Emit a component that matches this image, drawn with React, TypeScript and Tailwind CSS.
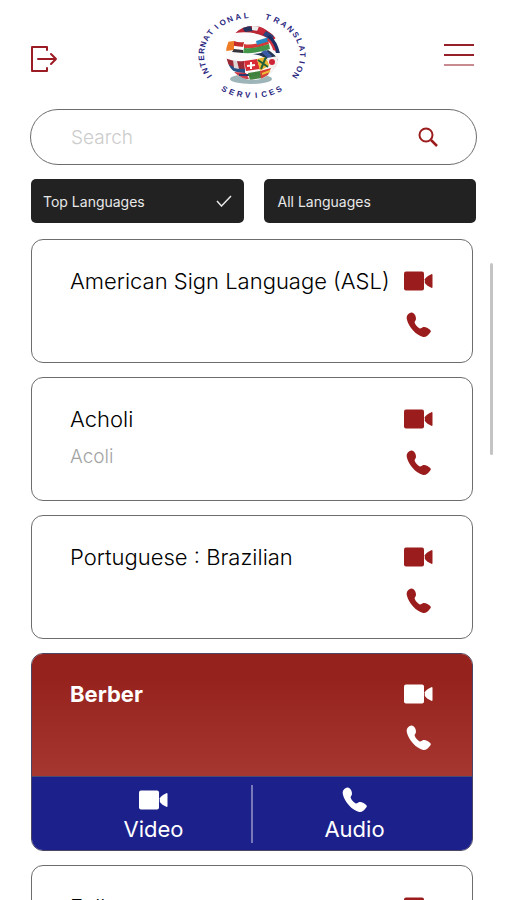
import { useId } from "react";

type Arc = { word: string; from: number; to: number; inward?: boolean };

const ARCS: Arc[] = [
  { word: "INTERNATIONAL", from: 237, to: 354 },
  { word: "TRANSLATION", from: 19, to: 121 },
  { word: "SERVICES", from: 212, to: 148, inward: true },
];

function ArcWord({ word, from, to, inward }: Arc) {
  const xs: string[] = [];
  const ys: string[] = [];
  const rot: string[] = [];
  word.split("").forEach((letter, i) => {
    const deg = from + ((to - from) * i) / (word.length - 1);
    const a = (deg * Math.PI) / 180;
    const turn = inward ? deg - 180 : deg;
    const t = (turn * Math.PI) / 180;
    const half = letter === "I" ? 1 : 3;
    const drop = 3;
    xs.push((60 + 51 * Math.sin(a) - half * Math.cos(t) - drop * Math.sin(t)).toFixed(1));
    ys.push((48 - 40 * Math.cos(a) - half * Math.sin(t) + drop * Math.cos(t)).toFixed(1));
    rot.push(turn.toFixed(1));
  });
  return (
    <text x={xs.join(" ")} y={ys.join(" ")} rotate={rot.join(" ")} className="fill-[#29267f] font-['Liberation_Sans',sans-serif] text-[8px] font-bold">
      {word}
    </text>
  );
}

function Logo() {
  const id = useId();
  return (
    <svg viewBox="0 0 120 96" role="img" aria-label="International Translation Services" className="h-24 w-[120px]">
      <defs>
        <clipPath id={id + "c"}><circle cx="61" cy="46" r="27" /></clipPath>
        <radialGradient id={id + "g"} cx="0.45" cy="0.4" r="0.7">
          <stop offset="0.75" stopColor="#ffffff" stopOpacity="0" />
          <stop offset="1" stopColor="#0b1522" stopOpacity="0.25" />
        </radialGradient>
      </defs>
      <ellipse cx="59" cy="72" rx="21" ry="5" fill="#9db4b8" />
      <circle cx="61" cy="46" r="27" fill="#fbfbfc" />
      <g clipPath={`url(#${id}c)`}>
        <path d="M43 26 Q53 15 68 19 L85 30 80 34 Q66 23 43 26z" fill="#b92532" />
        <path d="M50 20l8-2 3 6-8 1z" fill="#26315c" />
        <path d="M60 17l7 2-1 5-6-1z" fill="#eeeeee" />
        <path d="M67 20l7 3-3 4-6-3z" fill="#c8283a" />
        <path d="M74 24l8 5-3 4-8-5z" fill="#2c447e" />
        <path d="M34 35l8-1v9l-8 1z" fill="#ef7c24" />
        <path d="M42 34q5 2 10 1l-1 5q-4 1-9-1z" fill="#c42b2b" />
        <path d="M42 39l10 1v2l-10-1z" fill="#ffffff" />
        <path d="M42 42l9 1v3l-11-1z" fill="#35343b" />
        <path d="M52 37q9 2 24-4l1 4q-10 5-25 4z" fill="#d53a36" />
        <path d="M52 41q11 1 25-4l1 5q-13 5-27 4z" fill="#43954a" />
        <path d="M64 34l13-4 1 4-13 4z" fill="#2887c0" />
        <path d="M78 28q7 6 10 18h-4q-3-9-9-16z" fill="#1c2d63" />
        <path d="M76 31q6 5 8 13l-3-1q-1-5-6-10z" fill="#d3313c" />
        <path d="M60 47q10 0 16-4 7 4 10 10l-6 3q-8-8-20-9z" fill="#24334f" />
        <path d="M69 45l5-2 6 6-3 3z" fill="#3b5aa5" />
        <path d="M33 51q9 4 19 3l1 9q-10-1-17-4z" fill="#9c2735" />
        <path d="M36 57q8 5 17 5v4q-9 0-15-4z" fill="#275087" />
        <path d="M41 53l4 1 2 8-5-1z" fill="#dfd5d5" />
        <path d="M52 54l13-2 3 10-14 2z" fill="#d72b36" />
        <path d="M59 55v7m-4-3 8-1" stroke="#ffffff" strokeWidth="2" />
        <path d="M65 52l8-2 5 8-10 6z" fill="#efb834" />
        <path d="M66 53l10 7m-7 2 5-12" stroke="#22613a" strokeWidth="2" />
        <path d="M75 51l11-2-1 11-7 2z" fill="#f4f0ee" />
        <circle cx="80" cy="55" r="3" fill="#cf2437" />
        <path d="M42 65l12 1 3 6H46z" fill="#ca3845" />
        <path d="M47 68h10" stroke="#29386f" strokeWidth="2" />
        <path d="M56 66l12-2 2 7-12 2z" fill="#40813d" />
        <path d="M68 64l11-3-3 7-7 4z" fill="#d6392f" />
        <path d="M70 67l8-3" stroke="#efb834" strokeWidth="2" />
      </g>
      <circle cx="61" cy="46" r="27" fill={`url(#${id}g)`} />
      {ARCS.map((a) => <ArcWord key={a.word} {...a} />)}
    </svg>
  );
}

function VideoIcon() {
  return (
    <svg viewBox="0 0 30 20" fill="currentColor" aria-hidden="true" className="h-5 w-[30px]">
      <rect x="0" y="0.5" width="20" height="19" rx="2" />
      <path d="M20.800 8.200Q22 5.500 27.300 3.200q1.200-.4 1.200.8v12q0 1.200-1.200.8Q22 14.500 20.800 11.800z" />
    </svg>
  );
}

function PhoneIcon() {
  return (
    <svg viewBox="0 0 26 26" fill="currentColor" aria-hidden="true" className="size-[26px]">
      <path d="M1.500 3C3 .8 5.800-.2 7.500 1.300c1.900 1.700 2.900 4.200 2.300 6.400-.3 1.200-1.600 2-1 3.300 1 2.300 2.600 4.200 4.600 5.300 1.400.7 2.300-.8 3.800-1.300 2.200-.6 5.400 1.300 7.200 3.200.7.800.4 1.500-.2 2.300-1.800 2.600-4.300 4.900-7 4.500C10 23.500 2.500 14.500.9 7.500.5 5.700.6 4.300 1.500 3z" />
    </svg>
  );
}

function Actions({ name }: { name: string }) {
  return (
    <div className="flex w-[30px] shrink-0 flex-col items-center gap-[21px]">
      <button type="button" aria-label={`Video call, ${name}`}><VideoIcon /></button>
      <button type="button" aria-label={`Audio call, ${name}`}><PhoneIcon /></button>
    </div>
  );
}

function LanguageCard({ name, native }: { name: string; native?: string }) {
  return (
    <li className="flex h-[124px] shrink-0 justify-between rounded-xl border border-[#6d6d6d] px-[38px] pt-[31px] text-[#9b1c1c]">
      <div className="text-black">
        <h2 className="text-[22px] leading-5 whitespace-nowrap">{name}</h2>
        {native && <p className="pt-4 text-[19px] leading-6 text-[#a3a3a3]">{native}</p>}
      </div>
      <Actions name={name} />
    </li>
  );
}

export default function App() {
  return (
    <div className="flex h-screen flex-col overflow-hidden bg-white pt-[7px] font-[Inter,sans-serif] font-light text-black">
      <header className="grid grid-cols-3 items-center pr-8 pl-[30px]">
        <button type="button" aria-label="Log out" className="mt-2 justify-self-start text-[#9b1c24]">
          <svg viewBox="0 0 28 28" fill="none" stroke="currentColor" strokeWidth="2" strokeLinecap="round" strokeLinejoin="round" className="size-7">
            <path d="M17 5V2H2v24h15v-3M8 14h18M21 9l5 5-5 5" />
          </svg>
        </button>
        <div className="justify-self-center"><Logo /></div>
        <button type="button" aria-label="Menu" className="flex w-[30px] flex-col gap-2 justify-self-end">
          <span className="h-0.5 w-full bg-[#96202a]" />
          <span className="h-0.5 w-full bg-[#96202a]" />
          <span className="h-0.5 w-full bg-[#c78b91]" />
        </button>
      </header>

      <div className="pt-[6px] pr-[29px] pl-[30px]">
        <label className="flex h-14 items-center rounded-full border border-[#6d6d6d] pr-[38px] pl-10">
          <span className="sr-only">Search languages</span>
          <input type="text" placeholder="Search" className="h-9 min-w-0 flex-1 text-[19px] leading-8 outline-none placeholder:text-[#cccccc]" />
          <svg viewBox="0 0 20 20" fill="none" stroke="#9b1c1c" aria-hidden="true" className="size-5">
            <circle cx="8" cy="8" r="6.500" strokeWidth="2" />
            <path d="m13 13 6 6" strokeWidth="2.500" />
          </svg>
        </label>
        <div className="grid grid-cols-2 gap-5 px-px pt-[14px] text-[14px] font-normal text-[#e8e8e8]">
          <button type="button" aria-pressed="true" className="flex h-11 items-center justify-between rounded-[5px] bg-[#222222] px-3">
            Top Languages
            <svg viewBox="0 0 16 12" fill="none" stroke="currentColor" strokeWidth="1.500" aria-hidden="true" className="h-3 w-4"><path d="m1 6 4.500 5L15 1" /></svg>
          </button>
          <button type="button" aria-pressed="false" className="flex h-11 items-center rounded-[5px] bg-[#222222] px-[14px]">All Languages</button>
        </div>
      </div>

      <main className="flex min-h-0 flex-1 pt-4 pr-[13px] pl-[31px]">
        <ul className="flex min-w-0 flex-1 flex-col gap-[14px]">
          <LanguageCard name="American Sign Language (ASL)" />
          <LanguageCard name="Acholi" native="Acoli" />
          <LanguageCard name="Portuguese : Brazilian" />
          <li className="shrink-0 overflow-hidden rounded-xl border border-[#4a4560] text-white">
            <div className="flex h-[122px] justify-between bg-linear-to-b from-[#96221d] from-20% to-[#a63630] px-[38px] pt-[30px]">
              <h2 className="text-[22px] leading-5 font-bold">Berber</h2>
              <Actions name="Berber" />
            </div>
            <div className="grid h-[74px] grid-cols-[1fr_2px_1fr] items-center border-t border-[#4a4a70] bg-[#1c208b] text-[22px] leading-6 font-normal">
              <button type="button" className="flex flex-col items-center gap-1 pl-6"><span className="flex h-[26px] items-center"><VideoIcon /></span>Video</button>
              <span className="h-[58px] bg-[#7779bb]" />
              <button type="button" className="flex flex-col items-center gap-1 pr-4"><PhoneIcon />Audio</button>
            </div>
          </li>
          <LanguageCard name="Fulla" />
        </ul>
        <div aria-hidden="true" className="mt-6 ml-[17px] h-48 w-[3px] rounded-full bg-[#c4c4c4]" />
      </main>
    </div>
  );
}
